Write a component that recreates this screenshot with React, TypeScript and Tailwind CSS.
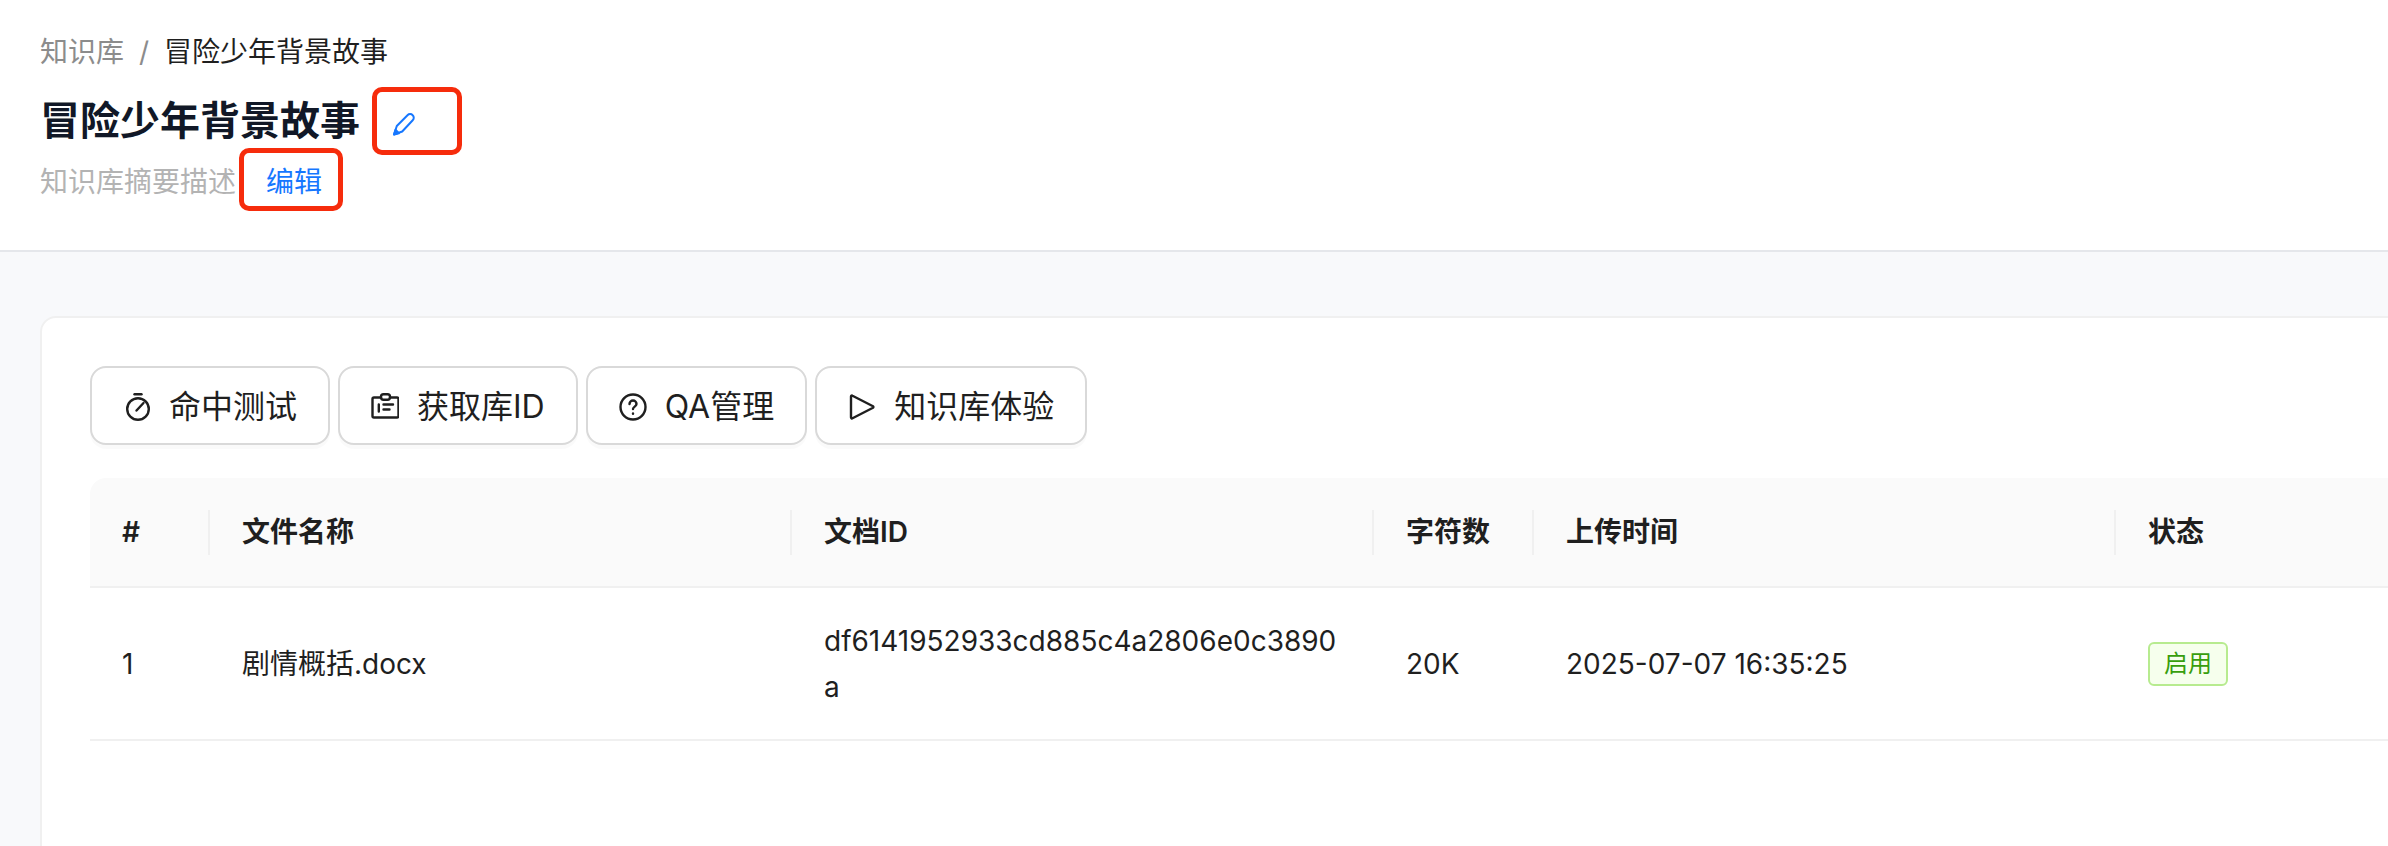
import React from 'react';

const FONT = 'font-["Inter","Noto_Sans_CJK_SC",sans-serif]';

const actions = [
  { label: '命中测试', icon: 'timer' },
  { label: '获取库ID', icon: 'badge' },
  { label: 'QA管理', icon: 'help' },
  { label: '知识库体验', icon: 'play' },
];

const ActionIcon = ({ name }: { name: string }) => {
  switch (name) {
    case 'timer':
      return (
        <svg width="28" height="28" viewBox="0 0 28 28" fill="none" stroke="currentColor" strokeWidth="2.4" strokeLinecap="round">
          <path d="M11.5 1.2h7" />
          <circle cx="15" cy="16" r="10.8" />
          <path d="M13.5 17.5l7-7.5" />
        </svg>
      );
    case 'badge':
      return (
        <svg width="28" height="28" viewBox="0 0 28 28" fill="none" stroke="currentColor" strokeWidth="2.4" strokeLinecap="round" strokeLinejoin="round">
          <path d="M10 4.5H3a1.5 1.5 0 0 0-1.5 1.5v17a1.5 1.5 0 0 0 1.5 1.5h23a1.5 1.5 0 0 0 1.5-1.5V6A1.5 1.5 0 0 0 26 4.5h-7" />
          <rect x="10" y="1.2" width="9" height="5.6" rx="2.5" />
          <path d="M7.8 11.5v7M12.5 11.5h9.5M12.5 16.5h6" />
        </svg>
      );
    case 'help':
      return (
        <svg width="28" height="28" viewBox="0 0 28 28" fill="none" stroke="currentColor" strokeWidth="2.4" strokeLinecap="round" strokeLinejoin="round">
          <circle cx="14" cy="14" r="12.5" />
          <path d="M10.5 11a3.5 3.5 0 0 1 7 0c0 2.5-3.5 2.7-3.5 5" />
          <path d="M14 20.5v.2" />
        </svg>
      );
    default:
      return (
        <svg width="28" height="28" viewBox="0 0 28 28" fill="none" stroke="currentColor" strokeWidth="2.4" strokeLinejoin="round">
          <path d="M3 3.5v21a1 1 0 0 0 1.5.8L25 14.8a1 1 0 0 0 0-1.6L4.5 2.7A1 1 0 0 0 3 3.5z" />
        </svg>
      );
  }
};

const PencilIcon = () => (
  <svg width="23" height="23" viewBox="0 0 23 23" fill="none" stroke="#1677ff" strokeWidth="2" strokeLinejoin="round">
    <path d="M1 21.5l2.8-8.5L14.5 2.2a3.6 3.6 0 0 1 5.2 0 3.6 3.6 0 0 1 0 5.1L9.2 18.5z" />
    <path d="M1 21.5l1.5-4.7 3.4 3.4z" fill="#1677ff" />
  </svg>
);

const HeaderCell = ({ className, children, first }: { className: string; children: React.ReactNode; first?: boolean }) => (
  <div className={`relative flex h-[108px] shrink-0 items-center pr-[32px] text-[28px] font-semibold text-[#1f1f1f] ${first ? 'pl-[32px]' : 'pl-[34px]'} ${className}`}>
    {!first && <span className="absolute left-0 top-[32px] h-[45px] w-[2px] bg-[#f0f0f0]" />}
    {children}
  </div>
);

export default function App() {
  return (
    <div className={`flex h-[846px] w-[2388px] flex-col overflow-hidden bg-[#f8f9fb] ${FONT}`}>
      <header className="h-[252px] shrink-0 border-b-2 border-[#e5e7eb] bg-white pl-[40px] pt-[32px]">
        <div className="flex h-[40px] items-center text-[28px] leading-[40px]">
          <span className="text-[#8c8c8c]">知识库</span>
          <span className="mx-[15px] text-[#8c8c8c]">/</span>
          <span className="text-[#1f1f1f]">冒险少年背景故事</span>
        </div>
        <div className="mt-[21px] flex h-[56px] items-center">
          <h1 className="text-[40px] font-bold leading-[56px] text-[#111827]">冒险少年背景故事</h1>
          <div className="ml-[12px] flex h-[68px] w-[90px] items-center rounded-[10px] border-[5px] border-[#f62c0c] pl-[16px] pt-[6px]">
            <PencilIcon />
          </div>
        </div>
        <div className="mt-[-1px] flex h-[63px] items-center">
          <span className="pt-[4px] text-[28px] text-[#b3b3b3]">知识库摘要描述</span>
          <div className="ml-[3px] flex h-[63px] w-[104px] items-center justify-center rounded-[10px] border-[5px] border-[#f62c0c] pl-[6px] pt-[4px] text-[28px] text-[#1677ff]">
            编辑
          </div>
        </div>
      </header>

      <main className="flex-1 pl-[40px] pt-[64px]">
        <section className="h-[600px] w-[2400px] rounded-[16px] border-2 border-[#f0f0f0] bg-white pl-[48px] pt-[48px]">
          <div className="flex gap-[8px]">
            {actions.map(a => (
              <button
                key={a.label}
                className="flex h-[79px] items-center gap-[18px] rounded-[16px] border-2 border-[#d9d9d9] bg-white px-[31px] pt-[3px] text-[32px] text-[#1f1f1f] shadow-[0_4px_0_rgba(0,0,0,0.02)]"
              >
                <ActionIcon name={a.icon} />
                <span>{a.label}</span>
              </button>
            ))}
          </div>

          <div className="mt-[33px]">
            <div className="flex rounded-tl-[16px] border-b-2 border-[#f0f0f0] bg-[#fafafa]">
              <HeaderCell first className="w-[118px]">#</HeaderCell>
              <HeaderCell className="w-[582px]">文件名称</HeaderCell>
              <HeaderCell className="w-[582px]">文档ID</HeaderCell>
              <HeaderCell className="w-[160px]">字符数</HeaderCell>
              <HeaderCell className="w-[582px]">上传时间</HeaderCell>
              <HeaderCell className="w-[400px]">状态</HeaderCell>
            </div>
            <div className="flex h-[153px] items-center border-b-2 border-[#f0f0f0] text-[28px] text-[#1f1f1f]">
              <div className="w-[118px] shrink-0 px-[32px]">1</div>
              <div className="w-[582px] shrink-0 pl-[34px] pr-[32px]">剧情概括.docx</div>
              <div className="w-[582px] shrink-0 break-all pl-[34px] pr-[32px] leading-[46px]">df6141952933cd885c4a2806e0c3890a</div>
              <div className="w-[160px] shrink-0 pl-[34px] pr-[32px]">20K</div>
              <div className="w-[582px] shrink-0 pl-[34px] pr-[32px]">2025-07-07 16:35:25</div>
              <div className="w-[400px] shrink-0 pl-[34px] pr-[32px]">
                <span className="inline-flex h-[44px] w-[80px] items-center justify-center rounded-[6px] border-2 border-[#b7eb8f] bg-[#f6ffed] text-[24px] text-[#389e0d]">
                  启用
                </span>
              </div>
            </div>
          </div>
        </section>
      </main>
    </div>
  );
}
